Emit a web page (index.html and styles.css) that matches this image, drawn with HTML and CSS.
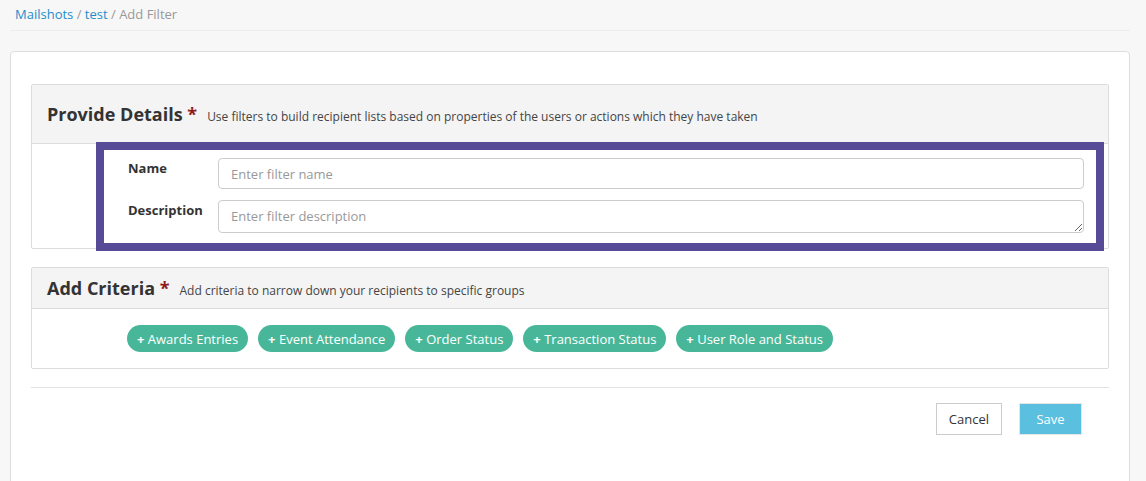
FILE: index.html
```html
<!DOCTYPE html>
<html lang="en">
<head>
  <meta charset="UTF-8" />
  <title>Add Filter</title>
  <link rel="stylesheet" href="styles.css">
</head>
<body>

<div class="breadcrumb">
  <a href="#">Mailshots</a> / <a href="#">test</a> / <span class="current">Add Filter</span>
</div>

<div class="card">

  <!-- Filter name and description -->
  <div class="panel">
    <div class="panel-heading tall">
      <h2>Provide Details <span class="req">*</span></h2>
      <span class="hint">Use filters to build recipient lists based on properties of the users or actions which they have taken</span>
    </div>
    <div class="panel-body">
      <div class="details highlight">
        <div class="form-row">
          <label for="filterName">Name</label>
          <input type="text" id="filterName" placeholder="Enter filter name">
        </div>
        <div class="form-row">
          <label for="filterDesc">Description</label>
          <textarea id="filterDesc" rows="1" placeholder="Enter filter description"></textarea>
        </div>
      </div>
    </div>
  </div>

  <!-- Criteria picker -->
  <div class="panel">
    <div class="panel-heading">
      <h2>Add Criteria <span class="req">*</span></h2>
      <span class="hint">Add criteria to narrow down your recipients to specific groups</span>
    </div>
    <div class="panel-body criteria">
      <button class="pill"><b>+</b> Awards Entries</button>
      <button class="pill"><b>+</b> Event Attendance</button>
      <button class="pill"><b>+</b> Order Status</button>
      <button class="pill"><b>+</b> Transaction Status</button>
      <button class="pill"><b>+</b> User Role and Status</button>
    </div>
  </div>

  <div class="actions">
    <button class="btn">Cancel</button>
    <button class="btn btn-save">Save</button>
  </div>

</div>

</body>
</html>
```

FILE: styles.css
```css
body {
  margin: 0;
  background: #f7f7f7;
  font-family: "Open Sans", Arial, sans-serif;
  font-size: 13px;
  color: #333;
}
.breadcrumb {
  margin: 0 16px 0 10px;
  padding: 5px 5px 7px;
  line-height: 18px;
  color: #999;
  border-bottom: 1px solid #ececec;
}
.breadcrumb a {
  color: #1f8dcb;
  text-decoration: none;
}
.card {
  margin: 20px 0 0 10px;
  width: 1078px;
  min-height: 460px;
  background: #fff;
  border: 1px solid #dedede;
  border-radius: 4px;
  padding: 32px 20px 0;
}
.panel {
  border: 1px solid #dcdcdc;
  border-radius: 2px;
  margin-bottom: 18px;
}
.panel-heading {
  background: #f4f4f4;
  border-bottom: 1px solid #dcdcdc;
  padding: 8px 15px;
  display: flex;
  align-items: baseline;
  gap: 10px;
}
.panel-heading.tall {
  padding: 17px 15px;
}
.panel-heading h2 {
  margin: 0;
  font-size: 18px;
  line-height: 24px;
  font-weight: 700;
  color: #333;
}
.req {
  color: #8e1b1b;
}
.hint {
  font-size: 12px;
  color: #444;
}
.panel-body {
  background: #fff;
}
.details {
  margin: 6px 12px 5px 72px;
  padding: 8px 12px 10px 24px;
}
.highlight {
  outline: 8px solid #574b98;
}
.form-row {
  display: flex;
  align-items: flex-start;
}
.form-row + .form-row {
  margin-top: 11px;
}
.form-row label {
  width: 90px;
  flex: none;
  font-weight: 700;
  padding-top: 1px;
}
.form-row input,
.form-row textarea {
  flex: 1;
  box-sizing: border-box;
  height: 31px;
  padding: 5px 12px;
  border: 1px solid #ccc;
  border-radius: 4px;
  font-family: inherit;
  font-size: 13px;
  color: #555;
}
.form-row textarea {
  height: 33px;
  padding-top: 6px;
  resize: vertical;
}
.form-row ::placeholder {
  color: #999;
}
.criteria {
  padding: 16px 15px 16px 95px;
  display: flex;
  gap: 10px;
}
.pill {
  height: 27px;
  padding: 0 10px;
  border: none;
  border-radius: 14px;
  background: #48b799;
  color: #fff;
  font-family: inherit;
  font-size: 13px;
  cursor: pointer;
}
.actions {
  border-top: 1px solid #e3e3e3;
  padding: 15px 27px 0 0;
  display: flex;
  justify-content: flex-end;
  gap: 17px;
}
.btn {
  height: 32px;
  padding: 0 12px;
  background: #fff;
  border: 1px solid #ccc;
  font-family: inherit;
  font-size: 13px;
  color: #333;
  cursor: pointer;
}
.btn-save {
  width: 63px;
  background: #5bbfdf;
  border-color: #e6e6e6;
  color: #fff;
}
```
